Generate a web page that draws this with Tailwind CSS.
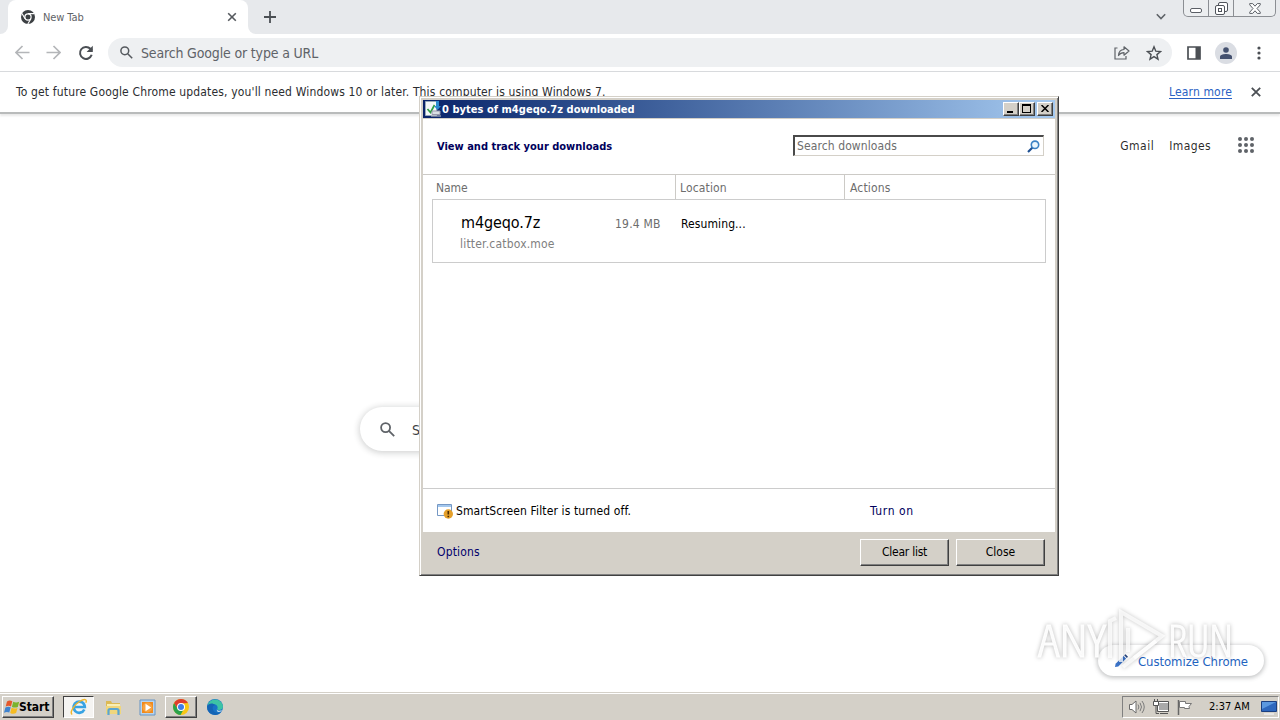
<!DOCTYPE html>
<html lang="en">
<head>
<meta charset="utf-8">
<title>New Tab</title>
<script src="https://cdn.jsdelivr.net/npm/@tailwindcss/browser@4"></script>
</head>
<body class="relative w-[1280px] h-[720px] overflow-hidden bg-white font-['DejaVu_Sans_Condensed','DejaVu_Sans',sans-serif] [font-stretch:condensed] text-[12px] leading-4 text-[#3c4043] whitespace-nowrap">

<!-- Browser -->
<div class="flex h-[692px] w-full flex-col bg-white">
  <!-- Tab strip -->
  <div class="flex h-[34px] shrink-0 bg-[#e7e9ec]">
    <div class="flex w-2 items-end bg-white"><div class="h-full w-2 rounded-br-lg bg-[#e7e9ec]"></div></div>
    <div class="flex w-60 items-center rounded-t-lg bg-white pl-[13px] pr-[11px]">
      <svg class="size-[14px]" viewBox="0 0 14 14"><circle cx="7" cy="7" r="7" fill="#3c4043"/><circle cx="7" cy="7" r="3.1" fill="#3c4043" stroke="#fff" stroke-width="1.2"/><path d="M7 3.6h6.3M4.1 8.8L1 3.4M9.9 8.8L6.8 14" stroke="#fff" stroke-width="1.1" fill="none"/></svg>
      <span class="ml-2 mt-px text-[11px] tracking-[-0.1px] text-[#5f6368]">New Tab</span>
      <svg class="ml-auto size-[10px]" viewBox="0 0 10 10"><path d="M1.2 1.2l7.6 7.6M8.8 1.2L1.2 8.8" stroke="#55595e" stroke-width="1.6"/></svg>
    </div>
    <div class="flex w-2 bg-white"><div class="h-full w-2 rounded-bl-lg bg-[#e7e9ec]"></div></div>
    <svg class="ml-[8px] mt-[11px] size-3" viewBox="0 0 12 12"><path d="M6 0v12M0 6h12" stroke="#4b4f54" stroke-width="1.8"/></svg>
    <svg class="ml-[880px] mt-[13px] h-[7px] w-[10px]" viewBox="0 0 10 7"><path d="M.8 1.200l4.200 4.300 4.200-4.300" fill="none" stroke="#5f6368" stroke-width="1.6"/></svg>
    <div class="ml-[17px] flex h-[17px] w-[93px] rounded-b-[5px] border border-t-0 border-[#8b8e93] bg-[#eceef0]">
      <div class="flex w-[25px] items-end justify-center border-r border-[#8b8e93] pb-[3px]"><div class="h-[5px] w-[12px] rounded-[2px] border border-[#5b5f66] bg-white"></div></div>
      <div class="flex w-[25px] items-center justify-center border-r border-[#8b8e93]"><svg class="size-[13px]" viewBox="0 0 13 13" fill="#fff" stroke="#50545b"><rect x="3.5" y=".5" width="9" height="9" rx="1.5"/><rect x=".5" y="3.5" width="9" height="9" rx="1.5"/><rect x="3.5" y="6.5" width="3" height="3"/></svg></div>
      <div class="flex flex-1 items-center justify-center"><svg class="h-[11px] w-3" viewBox="0 0 12 11"><path d="M.7.6h3L6 3.200 8.300.6h3v1.200L8 5.500l3.300 3.700v1.200h-3L6 7.800l-2.300 2.600h-3V9.200L4 5.500.7 1.800z" fill="#fff" stroke="#5b5f66" stroke-width="1"/></svg></div>
    </div>
  </div>
  <!-- Toolbar -->
  <div class="flex h-[38px] shrink-0 items-center border-b border-[#d8dadd] bg-white pl-[15px]">
    <svg class="size-[15px]" viewBox="0 0 15 15"><path d="M14.500 7.500H1.500M7.500 1L1 7.500 7.500 14" fill="none" stroke="#b4b6b9" stroke-width="1.700"/></svg>
    <svg class="ml-4 size-[15px]" viewBox="0 0 15 15"><path d="M.5 7.500h13M7.500 1L14 7.500 7.500 14" fill="none" stroke="#b4b6b9" stroke-width="1.700"/></svg>
    <svg class="ml-[17px] size-4" viewBox="0 0 16 16"><path d="M13.700 9.800A6 6 0 1 1 12.400 3.800L14 5.400" fill="none" stroke="#4b4f54" stroke-width="2"/><path d="M14.800 .8v6.200H8.600z" fill="#4b4f54"/></svg>
    <div class="ml-[14px] flex h-[29px] w-[1064px] items-center rounded-full bg-[#eef0f2] pl-3 pr-[10px]">
      <svg class="size-[13px]" viewBox="0 0 13 13" fill="none" stroke="#55595e" stroke-width="1.500"><circle cx="4.800" cy="4.800" r="3.900"/><path d="M7.700 7.700l4.500 4.500"/></svg>
      <span class="ml-2 text-[14px] tracking-[-0.16px] text-[#5f6368]">Search Google or type a URL</span>
      <svg class="ml-auto h-[15px] w-4" viewBox="0 0 16 15" fill="none" stroke="#5f6368" stroke-width="1.200"><path d="M3.500 3H1v11h11v-3"/><path d="M4.500 10.500c.2-4 2-5.800 5.500-6V1.800L15 6l-5 4.200V7.600c-2.500 0-4.200.8-5.500 2.900z" stroke-linejoin="round"/></svg>
      <svg class="ml-[16px] size-4" viewBox="0 0 16 16"><path d="M8 1.800l1.800 4.400 4.700.4-3.600 3 1.100 4.600L8 11.700l-4 2.500 1.100-4.600-3.600-3 4.700-.4z" fill="none" stroke="#4b4f54" stroke-width="1.400"/></svg>
    </div>
    <svg class="ml-[15px] h-[14px] w-[14px]" viewBox="0 0 14 14"><path d="M1 1h12v12H1z" fill="none" stroke="#4b4f54" stroke-width="1.700"/><path d="M8.500 1H13v12H8.500z" fill="#4b4f54"/></svg>
    <div class="ml-[14px] flex size-[22px] items-center justify-center rounded-full bg-[#dadde3]"><svg class="size-3" viewBox="0 0 12 12" fill="#44516f"><circle cx="6" cy="3" r="2.800"/><path d="M0 12V9.800C0 7.800 3.500 7 6 7s6 .8 6 2.800V12z"/></svg></div>
    <svg class="ml-5 h-[14px] w-1" viewBox="0 0 4 14" fill="#4b4f54"><circle cx="2" cy="2" r="1.600"/><circle cx="2" cy="7" r="1.600"/><circle cx="2" cy="12" r="1.600"/></svg>
  </div>
  <!-- Info bar -->
  <div class="flex h-[42px] shrink-0 items-center border-b-2 border-[#b9bbbb] px-4 pr-[19px] shadow-[0_2px_2px_#e9e9e9]">
    <span class="tracking-[0.155px] text-[#2b2d30]">To get future Google Chrome updates, you'll need Windows 10 or later. This computer is using Windows 7.</span>
    <span class="ml-auto tracking-[0.15px] text-[#2a62c4] underline underline-offset-2">Learn more</span>
    <svg class="ml-[19px] size-[10px]" viewBox="0 0 10 10"><path d="M.8.8l8.400 8.400M9.200.8L.8 9.200" stroke="#4b4f54" stroke-width="1.800"/></svg>
  </div>
  <!-- New tab page -->
  <div class="flex h-[62px] shrink-0 items-center justify-end pr-[26px] text-black/85">
    <span class="mt-px tracking-[0.5px]">Gmail</span>
    <span class="ml-[15px] mt-px tracking-[0.4px]">Images</span>
    <svg class="ml-[27px] size-4" viewBox="0 0 16 16" fill="#5f6368"><circle cx="2" cy="2" r="2"/><circle cx="8" cy="2" r="2"/><circle cx="14" cy="2" r="2"/><circle cx="2" cy="8" r="2"/><circle cx="8" cy="8" r="2"/><circle cx="14" cy="8" r="2"/><circle cx="2" cy="14" r="2"/><circle cx="8" cy="14" r="2"/><circle cx="14" cy="14" r="2"/></svg>
  </div>
  <div class="mx-auto mt-[231px] flex h-[44px] w-[560px] shrink-0 items-center rounded-full bg-white pl-5 shadow-[0_1px_6px_1px_rgba(32,33,36,0.2)]">
    <svg class="size-[15px]" viewBox="0 0 15 15" fill="none" stroke="#5f6368" stroke-width="1.800"><circle cx="5.600" cy="5.600" r="4.500"/><path d="M8.900 8.900l5.300 5.300"/></svg>
    <span class="ml-[17px] mt-[2px] text-[14px]">S</span>
  </div>
  <div class="mr-4 mt-auto mb-4 ml-auto flex h-[31px] w-[166px] items-center rounded-full bg-white pl-[17px] shadow-[0_1px_4px_1px_rgba(60,64,67,0.3)]">
    <svg class="size-[13px]" viewBox="0 0 13 13"><path d="M0 13l.6-3.200L8.500 2l2.600 2.600-7.800 7.800z" fill="#3b73c8"/><path d="M9.200 1.300l1.300-1.100 2.500 2.500-1.200 1.200z" fill="#24427c"/></svg>
    <span class="ml-[10px] mt-[2px] text-[13px] tracking-[-0.06px] text-[#1e63c0]">Customize Chrome</span>
  </div>
</div>

<!-- Taskbar -->
<div class="flex h-7 w-full items-start border-t border-[#d4d0c8] bg-[#d4d0c8] pt-[3px] shadow-[inset_0_1px_0_#fff]">
  <div class="ml-[2px] flex h-[22px] w-[52px] items-center border border-t-white border-l-white border-r-[#404040] border-b-[#404040] shadow-[inset_-1px_-1px_0_#808080]">
    <svg class="ml-px h-4 w-4" viewBox="0 0 16 16"><path d="M3 2.500c2-1.300 3.700-1 5.300-.2L7 7.400C5.300 6.500 3.500 6.600 1.700 7.600z" fill="#e5582b"/><path d="M9.200 2.700c1.900 1 3.800 1 6 0L13.800 7.900c-2 1-3.900.9-5.900 0z" fill="#7bb32e"/><path d="M1.400 8.500c1.900-1 3.600-1 5.300-.2l-1.400 5.300C3.700 12.700 2 12.700 0 13.800z" fill="#3f83cf"/><path d="M7.600 8.800c2 1 3.900 1 5.900.1l-1.400 5.200c-2 .9-3.900.9-5.900-.2z" fill="#f6bc22"/></svg>
    <span class="ml-[-1px] font-bold tracking-[-0.1px] text-black">Start</span>
  </div>
  <div class="ml-[9px] flex h-[22px] w-[31px] items-center justify-center border border-t-[#404040] border-l-[#404040] border-r-white border-b-white bg-[#f5f4f2]">
    <svg class="size-[18px]" viewBox="0 0 18 18"><path d="M14.300 11.500A5.600 5.600 0 1 1 14.800 9H4" fill="none" stroke="#38a3e3" stroke-width="2.700"/><path d="M2.200 16.500C-.8 14.500 4 7 9.500 3.500c5-3 8-2.500 6.300 1.300" fill="none" stroke="#efb62c" stroke-width="1.400"/></svg>
  </div>
  <svg class="ml-[11px] mt-[3px] h-[17px] w-[17px]" viewBox="0 0 17 17"><path d="M1 2h5l1 2h8v10H1z" fill="#dcb955"/><path d="M2 5h13v3H2z" fill="#f9eeb4"/><path d="M1 7h15v8H1z" fill="#f0d67c"/><path d="M3.500 16v-4.500q0-1.500 1.500-1.500h7q1.500 0 1.500 1.500V16" fill="none" stroke="#5ba5d0" stroke-width="2.200"/></svg>
  <svg class="ml-[17px] mt-[3px] size-[17px]" viewBox="0 0 17 17"><path d="M1 1h15v15H1z" fill="#b8d4ee" stroke="#6795c5"/><path d="M3 3h11v11H3z" fill="#f08a1d"/><circle cx="8.500" cy="8.500" r="5" fill="#f7a340"/><path d="M6.500 4.800l5.600 3.700-5.600 3.700z" fill="#fff"/></svg>
  <div class="ml-[9px] flex h-[22px] w-8 items-center justify-center border border-t-white border-l-white border-r-[#404040] border-b-[#404040] shadow-[inset_-1px_-1px_0_#808080]">
    <svg class="size-4" viewBox="0 0 16 16"><circle cx="8" cy="8" r="8" fill="#f9c714"/><path d="M1.100 4A8 8 0 0 0 7.500 16L11 9.700 8 8 4.700 9.700z" fill="#2ba24c"/><path d="M1.100 4A8 8 0 0 1 14.900 4L8 4.500 4.700 9.700z" fill="#df3c2e"/><circle cx="8" cy="8" r="4" fill="#fff"/><circle cx="8" cy="8" r="3" fill="#3f7de8"/></svg>
  </div>
  <svg class="ml-[10px] mt-[3px] size-4" viewBox="0 0 16 16"><circle cx="8" cy="8" r="8" fill="#1873c6"/><path d="M.2 7A8 8 0 0 1 16 7.500c0 3-3 4-6 3 1.500-2 .4-5-3-5.200C3.500 5 1 6 .2 7z" fill="#3dc3a5"/><path d="M.2 7C1.500 4 6 3.500 8.200 6c-3 .5-3.400 4-1 6.500 2 2 5 1.800 7.300.2A8 8 0 0 1 .2 7z" fill="#1464b5"/><path d="M9.500 10.500c1 1.400 4.500 1.600 5.500.5-.5 1.500-2.500 2.200-4.500 1.800z" fill="#d4e8ee"/></svg>
  <div class="ml-auto mr-px flex h-[22px] w-[157px] items-center border border-t-[#808080] border-l-[#808080] border-r-white border-b-white pl-[6px]">
    <svg class="h-[14px] w-4" viewBox="0 0 16 14"><path d="M.5 4.500H3L7 1v12L3 9.500H.5z" fill="#fff" stroke="#6b6b6b"/><path d="M9 4.500q1.800 2.500 0 5M11 2.800q3 4.200 0 8.400M13 1q4.500 6 0 12" fill="none" stroke="#7b7b7b"/></svg>
    <svg class="ml-2 size-4" viewBox="0 0 16 16"><path d="M5.500 3.500h10v8h-10z" fill="#a9a9a9" stroke="#fff"/><path d="M4.500 2.500h11v10h-11zM7 14.500h8" fill="none" stroke="#555"/><path d="M.5 2.500h5v4h-5z" fill="#fff" stroke="#555"/><path d="M1.500 0v2.500M4.500 0v2.500M3 7v7.500h3" stroke="#555" fill="none"/></svg>
    <svg class="ml-2 h-[15px] w-4" viewBox="0 0 16 15"><path d="M1.500 0v15" stroke="#666" stroke-width="1.500"/><path d="M2.500 1.500h6v2h6l-2.500 3 .5 2H7.500v-1h-5z" fill="#fff" stroke="#777"/></svg>
    <span class="ml-[16px] w-[42px] text-[11px] text-black">2:37 AM</span>
    <svg class="ml-[10px] h-[15px] w-4" viewBox="0 0 16 15"><path d="M.5 1.500h15v10H.5z" fill="#2d67bd" stroke="#1b3f80"/><path d="M1 2h14L1 9z" fill="#5b98df"/><path d="M3 14h10" stroke="#eee" stroke-width="1.500"/></svg>
  </div>
</div>

<!-- Downloads window -->
<div class="absolute left-[419px] top-[96px] flex h-[480px] w-[640px] flex-col border border-t-[#d4d0c8] border-l-[#d4d0c8] border-r-[#404040] border-b-[#404040] bg-[#d4d0c8] p-[3px] text-black shadow-[inset_1px_1px_0_#fff,inset_-1px_-1px_0_#808080]">
  <div class="flex h-[18px] shrink-0 items-center bg-linear-to-r from-[#0a246a] to-[#a6caf0] px-[2px]">
    <svg class="size-4" viewBox="0 0 16 16"><path d="M.5.5h11v14H.5z" fill="#f4f8f8" stroke="#9ab"/><path d="M2.500 8l3 3.500L9.500 4" fill="none" stroke="#2f9e44" stroke-width="1.700"/><path d="M11 0h3v5h2l-3.500 4L9 5h2z" fill="#2d8bd0"/><path d="M7 10h8v3.500H7z" fill="#d9dfe4" stroke="#99a"/><path d="M6 15h10" stroke="#ccc"/></svg>
    <span class="ml-px mt-px text-[11px] font-bold tracking-[0.03px] text-white">0 bytes of m4geqo.7z downloaded</span>
    <div class="ml-auto flex h-[14px] w-4 items-end border border-t-white border-l-white border-r-[#404040] border-b-[#404040] bg-[#d4d0c8] pb-[2px] pl-[3px] shadow-[inset_-1px_-1px_0_#808080]"><div class="h-[2px] w-[6px] bg-black"></div></div>
    <div class="flex h-[14px] w-4 items-start border border-t-white border-l-white border-r-[#404040] border-b-[#404040] bg-[#d4d0c8] pl-[2px] pt-px shadow-[inset_-1px_-1px_0_#808080]"><div class="h-[9px] w-[9px] border border-t-2 border-black"></div></div>
    <div class="ml-[2px] flex h-[14px] w-4 items-center justify-center border border-t-white border-l-white border-r-[#404040] border-b-[#404040] bg-[#d4d0c8] shadow-[inset_-1px_-1px_0_#808080]"><svg class="mr-px mb-px h-[7px] w-2" viewBox="0 0 8 7"><path d="M.5 0l7 7M7.500 0l-7 7" stroke="#000" stroke-width="1.500"/></svg></div>
  </div>
  <div class="mt-px flex min-h-0 flex-1 flex-col bg-white">
    <div class="flex h-[56px] shrink-0 items-center border-b border-[#cccac6] pl-[14px] pr-[11px]">
      <span class="mt-px text-[11px] font-bold text-[#00005c]">View and track your downloads</span>
      <div class="mb-[2px] ml-auto flex h-[21px] w-[251px] items-center border border-t-2 border-l-2 border-t-[#4a4a4a] border-l-[#4a4a4a] border-r-[#d4d0c8] border-b-[#d4d0c8] pl-[2px] pr-[3px]">
        <span class="tracking-[0.1px] text-[#6d6d6d]">Search downloads</span>
        <svg class="ml-auto size-[13px]" viewBox="0 0 13 13" fill="none"><path d="M5.500 7.500L1 12" stroke="#1d4f91" stroke-width="2.200"/><circle cx="8" cy="4.800" r="3.700" fill="#eaf6fd" stroke="#3b82c4" stroke-width="1.600"/></svg>
      </div>
    </div>
    <div class="flex h-6 shrink-0 items-center tracking-[0.15px] text-[#6d6d6d]">
      <div class="flex h-full w-[253px] items-center border-r border-[#cccac6] pl-[13px] pt-[2px] tracking-[-0.1px]">Name</div>
      <div class="flex h-full w-[169px] items-center border-r border-[#cccac6] pl-1 pt-[2px]">Location</div>
      <div class="pl-[5px] pt-[2px]">Actions</div>
    </div>
    <div class="ml-[9px] flex h-[64px] w-[614px] shrink-0 border border-[#cccccc] pl-[27px]">
      <div class="w-[155px] pt-[13px]">
        <div class="h-5 pl-[1px] text-[16px] leading-5 tracking-[-0.1px]">m4geqo.7z</div>
        <div class="mt-[3px] tracking-[0.2px] text-[#808080]">litter.catbox.moe</div>
      </div>
      <div class="w-[66px] pt-4 tracking-[0.2px] text-[#6d6d6d]">19.4 MB</div>
      <div class="pt-4 tracking-[0.1px]">Resuming...</div>
    </div>
    <div class="mt-auto flex h-[44px] shrink-0 items-center border-t border-[#cccccc] pl-[14px]">
      <svg class="size-4" viewBox="0 0 16 16"><path d="M.5 1.500h14v11H.5z" fill="#fff" stroke="#7598c4"/><path d="M1 2h13v2H1z" fill="#a4c8ee"/><circle cx="11.300" cy="11" r="4.700" fill="#e5a02a"/><path d="M11.300 8v3.500M11.300 12.700v1.500" stroke="#4d2b00" stroke-width="1.600"/></svg>
      <span class="ml-[3px] w-[414px] tracking-[0.12px]">SmartScreen Filter is turned off.</span>
      <span class="tracking-[0.6px] text-[#00005c]">Turn on</span>
    </div>
  </div>
  <div class="flex h-10 shrink-0 items-center pl-[14px] pr-[10px]">
    <span class="tracking-[0.15px] text-[#00006c]">Options</span>
    <div class="ml-auto flex h-[27px] w-[89px] items-center justify-center border border-t-white border-l-white border-r-[#404040] border-b-[#404040] tracking-[-0.25px] shadow-[inset_-1px_-1px_0_#808080]">Clear list</div>
    <div class="ml-[7px] flex h-[27px] w-[89px] items-center justify-center border border-t-white border-l-white border-r-[#404040] border-b-[#404040] shadow-[inset_-1px_-1px_0_#808080]">Close</div>
  </div>
</div>

<!-- Watermark overlay -->
<svg class="absolute left-[1030px] top-[600px] h-[80px] w-[210px] drop-shadow-[0_0_2px_rgba(0,0,0,0.3)]" viewBox="0 0 210 80" font-family="Open Sans, sans-serif" font-size="45" font-weight="300" style="font-stretch:75%">
  <g fill="#fff" fill-opacity=".9" stroke="#fff" stroke-opacity=".9" stroke-width=".9">
    <text x="8" y="57" textLength="68" lengthAdjust="spacingAndGlyphs">ANY</text>
    <text x="138" y="57" textLength="65" lengthAdjust="spacingAndGlyphs">RUN</text>
  </g>
  <g fill="none" stroke="#fff" stroke-opacity=".75" stroke-width="4">
    <path d="M80 58V21l6-3"/>
    <path d="M91 62V12l41 24-39 31"/>
    <path d="M98 28v24M104 58l22-17"/>
  </g>
</svg>
</body>
</html>
